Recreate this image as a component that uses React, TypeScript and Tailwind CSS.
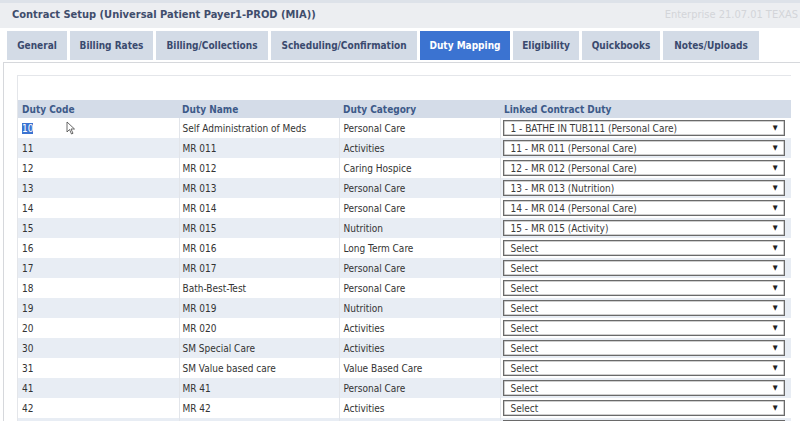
import React from "react";

const tabs = [
  { label: "General", w: 60 },
  { label: "Billing Rates", w: 83 },
  { label: "Billing/Collections", w: 112 },
  { label: "Scheduling/Confirmation", w: 146 },
  { label: "Duty Mapping", w: 90, active: true },
  { label: "Eligibility", w: 66 },
  { label: "Quickbooks", w: 78 },
  { label: "Notes/Uploads", w: 96 },
];

const rows: [string, string, string, string][] = [
  ["10", "Self Administration of Meds", "Personal Care", "1 - BATHE IN TUB111 (Personal Care)"],
  ["11", "MR 011", "Activities", "11 - MR 011 (Personal Care)"],
  ["12", "MR 012", "Caring Hospice", "12 - MR 012 (Personal Care)"],
  ["13", "MR 013", "Personal Care", "13 - MR 013 (Nutrition)"],
  ["14", "MR 014", "Personal Care", "14 - MR 014 (Personal Care)"],
  ["15", "MR 015", "Nutrition", "15 - MR 015 (Activity)"],
  ["16", "MR 016", "Long Term Care", "Select"],
  ["17", "MR 017", "Personal Care", "Select"],
  ["18", "Bath-Best-Test", "Personal Care", "Select"],
  ["19", "MR 019", "Nutrition", "Select"],
  ["20", "MR 020", "Activities", "Select"],
  ["30", "SM Special Care", "Activities", "Select"],
  ["31", "SM Value based care", "Value Based Care", "Select"],
  ["41", "MR 41", "Personal Care", "Select"],
  ["42", "MR 42", "Activities", "Select"],
  ["", "", "", ""],
];

function Select({ value }: { value: string }) {
  return (
    <div className="flex h-[16px] w-[282px] items-center justify-between border border-[#6a6a6a] bg-white pl-[7px] pr-[6px] shadow-[inset_0_0_0_0.5px_#a0a0a0]">
      <span className="text-[#3a3a3a]">{value}</span>
      <span className="text-[7px] leading-none text-[#222]">▼</span>
    </div>
  );
}

export default function App() {
  return (
    <div
      className="h-[421px] w-[800px] overflow-hidden bg-white text-[10px] font-stretch-semi-condensed"
      style={{ fontFamily: '"DejaVu Sans Condensed", "DejaVu Sans", Verdana, sans-serif' }}
    >
      <div className="h-[3px] bg-[#dde2e9]" />
      <div className="flex h-[25px] items-center justify-between overflow-hidden bg-[#eceef1] pl-[12px] pr-[2px]">
        <span className="text-[11px] font-bold text-[#3f4d6c]">
          Contract Setup (Universal Patient Payer1-PROD (MIA))
        </span>
        <span className="whitespace-nowrap text-[11px] text-[#d3d5d9]">Enterprise 21.07.01 TEXAS</span>
      </div>
      <div className="flex gap-[3px] pl-[7px] pt-[3px]">
        {tabs.map((t) => (
          <div
            key={t.label}
            className={
              "flex h-[29px] items-center justify-center font-bold " +
              (t.active ? "bg-[#3b73d1] text-white" : "bg-[#d3dbe6] text-[#3a4a6e]")
            }
            style={{ width: t.w }}
          >
            {t.label}
          </div>
        ))}
      </div>
      <div className="ml-[3px] mt-[2px] h-full border-l border-t border-[#d6d8dc] pl-[13px] pt-[12px]">
        <div className="w-[774px] border-l border-t border-[#e4e6ea]">
          <div className="h-[24px]" />
          <table className="w-full border-collapse">
            <thead>
              <tr className="h-[18px] bg-[#d4dce8] text-left font-bold text-[#3d5a89]">
                <th className="w-[161px] pl-[4px] font-bold">Duty Code</th>
                <th className="w-[160px] pl-[3px] font-bold">Duty Name</th>
                <th className="w-[161px] pl-[4px] font-bold">Duty Category</th>
                <th className="pl-[4px] font-bold">Linked Contract Duty</th>
              </tr>
            </thead>
            <tbody>
              {rows.map((r, i) => (
                <tr key={i} className={"h-[20px] text-[#333] " + (i % 2 === 1 ? "bg-[#e8edf4]" : "bg-white")}>
                  <td className="border-r border-[#e2e5ea] pl-[4px]">
                    {i === 0 ? (
                      <span className="relative">
                        <span className="bg-[#3b73d1] text-white">10</span>
                        <svg className="absolute left-[44px] top-[-2px]" width="10" height="14" viewBox="0 0 10 14">
                          <path d="M1 1 L1 11 L3.5 8.5 L5.5 13 L7 12.3 L5 8 L8.5 8 Z" fill="white" stroke="#444" strokeWidth="0.8" />
                        </svg>
                      </span>
                    ) : (
                      r[0]
                    )}
                  </td>
                  <td className="border-r border-[#e2e5ea] pl-[3px]">{r[1]}</td>
                  <td className="border-r border-[#e2e5ea] pl-[4px]">{r[2]}</td>
                  <td className="pl-[2px]">
                    {r[3] ? <Select value={r[3]} /> : <div className="h-[16px] w-[282px] border border-b-0 border-[#6a6a6a] bg-white" />}
                  </td>
                </tr>
              ))}
            </tbody>
          </table>
        </div>
      </div>
    </div>
  );
}
